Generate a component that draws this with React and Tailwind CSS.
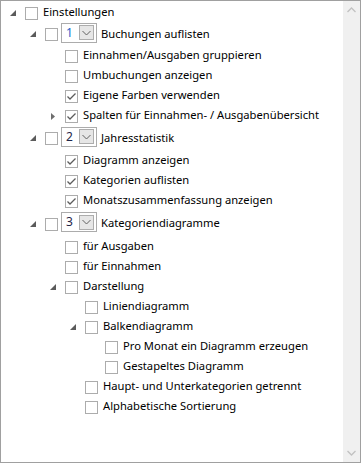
import React from 'react';

// tree rows: level, expander ('open' | 'closed' | null), checked, combo value
const rows = [
  { level: 0, exp: 'open', text: 'Einstellungen' },
  { level: 1, exp: 'open', combo: '1', comboColor: 'text-[#1c63c9]', text: 'Buchungen auflisten', h: 'h-[23px]' },
  { level: 2, text: 'Einnahmen/Ausgaben gruppieren' },
  { level: 2, text: 'Umbuchungen anzeigen' },
  { level: 2, checked: true, text: 'Eigene Farben verwenden' },
  { level: 2, exp: 'closed', checked: true, text: 'Spalten für Einnahmen- / Ausgabenübersicht' },
  { level: 1, exp: 'open', combo: '2', text: 'Jahresstatistik', h: 'h-[25px]' },
  { level: 2, checked: true, text: 'Diagramm anzeigen' },
  { level: 2, checked: true, text: 'Kategorien auflisten' },
  { level: 2, checked: true, text: 'Monatszusammenfassung anzeigen' },
  { level: 1, exp: 'open', combo: '3', text: 'Kategoriendiagramme', h: 'h-[26px]' },
  { level: 2, text: 'für Ausgaben' },
  { level: 2, text: 'für Einnahmen' },
  { level: 2, exp: 'open', text: 'Darstellung' },
  { level: 3, text: 'Liniendiagramm' },
  { level: 3, exp: 'open', text: 'Balkendiagramm' },
  { level: 4, text: 'Pro Monat ein Diagramm erzeugen' },
  { level: 4, text: 'Gestapeltes Diagramm' },
  { level: 3, text: 'Haupt- und Unterkategorien getrennt' },
  { level: 3, text: 'Alphabetische Sortierung' },
];

const indent = ['pl-0', 'pl-[20px]', 'pl-[40px]', 'pl-[60px]', 'pl-[80px]'];

function Expander({ type }) {
  if (type === 'open') {
    return (
      <svg width="6" height="6" viewBox="0 0 6 6" className="ml-[9px] -mt-[1px]">
        <polygon points="6,0 6,6 0,6" fill="#5b5b5b" />
      </svg>
    );
  }
  if (type === 'closed') {
    return (
      <svg width="4" height="7" viewBox="0 0 4 7" className="ml-[10px]">
        <polygon points="0,0 4,3.5 0,7" fill="#6e6e6e" />
      </svg>
    );
  }
  return null;
}

function CheckBox({ checked }) {
  return (
    <div className="w-[13px] h-[13px] shrink-0 border border-[#acacac] bg-white flex items-center justify-center">
      {checked && (
        <svg width="11" height="11" viewBox="0 0 11 11">
          <path d="M1.5 5.5 L4 8 L9.5 2.5" fill="none" stroke="#5c5c5c" strokeWidth="1.3" />
        </svg>
      )}
    </div>
  );
}

function Combo({ value, color }) {
  return (
    <div className="ml-[3px] mb-[4px] w-[36px] h-[20px] border border-[#acacac] bg-white flex items-center pl-[4px] pr-[2px]">
      <span className={`flex-1 text-[12px] leading-none ${color || 'text-[#1f2548]'}`}>{value}</span>
      <div className="w-[15px] h-[15px] border border-[#adadad] bg-[#e6e6e6] flex items-center justify-center">
        <svg width="9" height="6" viewBox="0 0 9 6">
          <path d="M0.5 1 L4.5 5 L8.5 1" fill="none" stroke="#606060" strokeWidth="1" />
        </svg>
      </div>
    </div>
  );
}

export default function App() {
  return (
    <div
      className="w-[361px] h-[463px] border border-[#a0a0a0] bg-white flex text-black"
      style={{ fontFamily: '"Noto Sans", "Open Sans", sans-serif' }}
    >
      <div className="flex-1 pt-[2px]">
        {rows.map((r, i) => (
          <div key={i} className={`flex items-center ${r.h || 'h-[20px]'} ${indent[r.level]}`}>
            <div className="w-[24px] shrink-0 flex items-center">
              <Expander type={r.exp} />
            </div>
            <CheckBox checked={r.checked} />
            {r.combo && <Combo value={r.combo} color={r.comboColor} />}
            <span className={`${r.combo ? 'ml-[4px]' : 'ml-[5px]'} text-[11.2px] whitespace-nowrap leading-none -mt-[2px]`}>
              {r.text}
            </span>
          </div>
        ))}
      </div>
      <div className="w-[17px] bg-[#f0f0f0] flex flex-col justify-between items-center py-[6px]">
        <svg width="9" height="6" viewBox="0 0 9 6">
          <path d="M0.5 5 L4.5 1 L8.5 5" fill="none" stroke="#c2c2c2" strokeWidth="1.3" />
        </svg>
        <svg width="9" height="6" viewBox="0 0 9 6">
          <path d="M0.5 1 L4.5 5 L8.5 1" fill="none" stroke="#c2c2c2" strokeWidth="1.3" />
        </svg>
      </div>
    </div>
  );
}
